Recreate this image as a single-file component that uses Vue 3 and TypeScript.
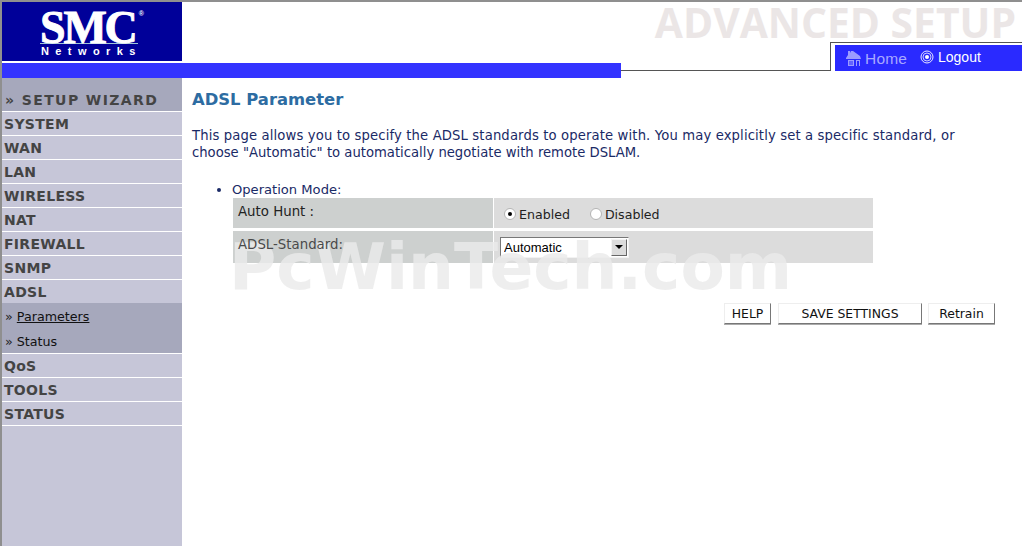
<script setup lang="ts">
import { ref } from 'vue'

const menu = ['SYSTEM', 'WAN', 'LAN', 'WIRELESS', 'NAT', 'FIREWALL', 'SNMP', 'ADSL']
const menuAfter = ['QoS', 'TOOLS', 'STATUS']
const autoHunt = ref('enabled')
const standard = ref('Automatic')
</script>

<template>
  <div class="page">
    <header class="header">
      <div class="brand">
        <div class="logo">
          <div class="logo-mark">SMC<sup>®</sup></div>
          <div class="logo-sub">Networks</div>
        </div>
        <div class="bar"></div>
      </div>
      <div class="head-right">
        <div class="title">ADVANCED SETUP</div>
        <div class="nav-row">
          <div class="nav-line"></div>
          <div class="nav-frame">
            <nav class="nav">
              <a class="nav-link home">
                <svg width="17" height="17" viewBox="0 0 17 17">
                  <path d="M1 8 L3 5 V1 H5 V3 L6 1 H8 L15 6 L16 9 H1 Z" fill="#9c9cff" />
                  <path d="M3 10 H9 V16 H3 Z M11 10 H15 V16 H14 V11 H12 V16 H11 Z" fill="#9c9cff" />
                  <path d="M4 12 H8 M4 14 H8" stroke="#2a2aff" stroke-width="1" />
                </svg>
                Home
              </a>
              <a class="nav-link logout">
                <svg width="14" height="14" viewBox="0 0 14 14">
                  <circle cx="7" cy="7" r="6" fill="none" stroke="#e8e8ff" stroke-width="1" />
                  <circle cx="7" cy="7" r="4" fill="none" stroke="#c8c8ff" stroke-width="1" />
                  <circle cx="7" cy="7" r="2" fill="#fff" />
                </svg>
                Logout
              </a>
            </nav>
          </div>
        </div>
      </div>
    </header>

    <div class="body">
      <aside class="sidebar">
        <a class="wizard">» SETUP WIZARD</a>
        <a v-for="item in menu" :key="item" class="item">{{ item }}</a>
        <div class="submenu">
          <a class="sub"><span class="chev">»</span> <span class="current">Parameters</span></a>
          <a class="sub"><span class="chev">»</span> Status</a>
        </div>
        <a v-for="item in menuAfter" :key="item" class="item">{{ item }}</a>
      </aside>

      <main class="content">
        <h1>ADSL Parameter</h1>
        <p class="intro">
          This page allows you to specify the ADSL standards to operate with. You may explicitly set a specific standard, or
          choose "Automatic" to automatically negotiate with remote DSLAM.
        </p>
        <ul class="modes">
          <li>Operation Mode:</li>
        </ul>
        <div class="form">
          <div class="label first"><span>Auto Hunt :</span></div>
          <div class="value first">
            <label class="radio">
              <input v-model="autoHunt" type="radio" value="enabled" />
              Enabled
            </label>
            <label class="radio">
              <input v-model="autoHunt" type="radio" value="disabled" />
              Disabled
            </label>
          </div>
          <div class="label"><span class="under">ADSL-Standard:</span></div>
          <div class="value">
            <div class="select">
              <select v-model="standard">
                <option>Automatic</option>
                <option>G.Dmt</option>
                <option>G.Lite</option>
                <option>T1.413</option>
              </select>
              <span class="arrow"></span>
            </div>
          </div>
        </div>
        <div class="actions">
          <button class="help">HELP</button>
          <button class="save">SAVE SETTINGS</button>
          <button class="retrain">Retrain</button>
        </div>
      </main>
    </div>

    <div class="stamp">PcWinTech.com</div>
  </div>
</template>

<style>
html, body { background: #fff; overflow: hidden; }
</style>

<style scoped>
.page {
  position: relative;
  box-sizing: border-box;
  height: 546px;
  border-top: 2px solid #8f8f8f;
  border-left: 2px solid #8f8f8f;
  display: flex;
  flex-direction: column;
  font-family: "DejaVu Sans", Verdana, sans-serif;
  overflow: hidden;
}
.header { display: flex; height: 76px; }
.brand { width: 619px; flex-shrink: 0; }
.logo {
  width: 180px; height: 59px; background: #000099;
  color: #fff; box-sizing: border-box; padding: 7px 0 0 38px;
}
.logo-mark {
  font-family: "Liberation Serif", serif; font-weight: bold; font-size: 46px;
  box-sizing: border-box; padding-top: 4px;
  line-height: 30px; letter-spacing: -2.2px; height: 35px; width: 98px;
  -webkit-text-stroke: .9px #fff;
  border-bottom: 1px solid #9fc4d8; white-space: nowrap;
}
.logo-mark sup {
  font-size: 7px; font-family: "Liberation Sans", sans-serif; letter-spacing: 0;
  -webkit-text-stroke: 0; vertical-align: 27px; line-height: 0; margin-left: 3px;
}
.logo-sub {
  font-family: "Liberation Sans", sans-serif; font-weight: bold; font-size: 11px;
  letter-spacing: 6.4px; line-height: 12px; margin-top: 1px; padding-left: 1px; white-space: nowrap;
}
.bar { height: 15px; margin-top: 2px; background: #3333ff; }
.head-right { flex: 1; display: flex; flex-direction: column; }
.title {
  height: 40px; text-align: right; padding-right: 6px;
  font-family: "Open Sans", sans-serif; font-weight: 700; font-size: 40.8px;
  line-height: 40px; color: #ebe6e6; white-space: nowrap;
}
.nav-row { display: flex; height: 29px; }
.nav-line { width: 209px; border-bottom: 1px solid #555; box-sizing: border-box; }
.nav-frame {
  flex: 1; border-top: 1px solid #555; border-left: 1px solid #555;
  padding: 2px 0 0 4px; box-sizing: border-box;
  background: linear-gradient(#ebe6e6, #ebe6e6) no-repeat 4px 100% / 84px 1px;
}
.nav {
  height: 26px; background: #2a2aff; display: flex; align-items: center;
  padding-left: 10px; font-family: "Liberation Sans", Arial, sans-serif; font-size: 14px;
}
.nav-link { display: flex; align-items: center; gap: 3px; }
.home { color: #a8a8ff; font-size: 15.5px; width: 75px; letter-spacing: .2px; padding-top: 1px; }
.logout { color: #fff; gap: 4px; margin-bottom: 2px; }

.body { flex: 1; display: flex; min-height: 0; }
.sidebar {
  width: 180px; flex-shrink: 0; background: #c6c6d8; color: #444;
  font-weight: bold; font-size: 14px; letter-spacing: .3px;
}
.wizard {
  display: block; height: 34px; box-sizing: border-box; padding: 13px 0 0 3px;
  background: #a6a8bc; border-bottom: 1px solid #fff;
  font-size: 14px; line-height: 19px; letter-spacing: 1.4px;
}
.item {
  display: block; height: 24px; box-sizing: border-box; padding: 1px 0 0 2px;
  border-bottom: 1px solid #fff; line-height: 23px;
}
.submenu { background: #a6a8bc; height: 50px; border-bottom: 1px solid #fff; margin-top: -1px; }
.sub {
  display: block; height: 25px; line-height: 27px; padding-left: 3px;
  font-weight: normal; font-size: 12.7px; color: #111; letter-spacing: 0;
}
.chev { color: #222; }
.current { text-decoration: underline; }

.content { flex: 1; padding: 0 0 0 10px; color: #1a2a66; font-size: 13.2px; min-width: 0; }
h1 { margin: 12px 0 0; font-size: 16.4px; line-height: 20px; color: #2d6ca2; font-weight: bold; }
.intro { margin: 17px 0 0; line-height: 17px; width: 790px; }
.intro::first-line { letter-spacing: .13px; }
.modes { margin: 20px 0 0; padding: 0 0 0 40px; line-height: 17px; font-size: 13.1px; }
.form {
  display: grid; grid-template-columns: 260px 379px; column-gap: 1px;
  margin-left: 41px; width: 640px; color: #222; font-size: 13.33px;
}
.label { background: #cdd0cf; height: 32px; padding: 5px 0 0 5px; box-sizing: border-box; line-height: 17px; }
.under { position: relative; z-index: 1; color: #4a4a4a; }
.value { background: #dcdcdc; height: 32px; display: flex; align-items: center; padding-left: 6px; box-sizing: border-box; }
.first { height: 30px; margin-bottom: 3px; }
.value.first { padding-left: 10px; padding-top: 2px; font-size: 12.6px; }
.radio { display: flex; align-items: center; gap: 3px; margin-right: 20px; }
.radio input {
  appearance: none; width: 12px; height: 12px; margin: 0; border-radius: 50%;
  background: #fff; border: 1px solid #b4b4b4; box-sizing: border-box;
  display: grid; place-items: center;
}
.radio input:checked::after { content: ''; width: 4px; height: 4px; border-radius: 50%; background: #000; }
.select { position: relative; width: 129px; height: 21px; }
.select select {
  appearance: none; width: 100%; height: 100%; background: #fff; box-sizing: border-box;
  border: 1px solid; border-color: #777 #f2f2f2 #f2f2f2 #777; border-radius: 0;
  padding: 0 0 0 3px; margin: 0;
  font-family: "Liberation Sans", Arial, sans-serif; font-size: 13px; color: #000;
}
.arrow {
  position: absolute; right: 2px; top: 2px; width: 16px; height: 17px; background: #dcdcdc;
  box-sizing: border-box; border: 1px solid; border-color: #f4f4f4 #666 #666 #f4f4f4;
  display: grid; place-items: center; pointer-events: none;
}
.arrow::after {
  content: ''; border-left: 4px solid transparent; border-right: 4px solid transparent;
  border-top: 4px solid #000;
}
.actions { display: flex; gap: 6px; margin: 40px 0 0 532px; }
button {
  height: 21px; padding: 0; background: #fff; color: #111; box-sizing: border-box;
  border: 1px solid; border-color: #eee #777 #777 #eee;
  box-shadow: 0 1px 0 #aaa;
  font-family: "DejaVu Sans", Verdana, sans-serif; font-size: 12.4px;
}
.help { width: 47px; }
.save { width: 144px; margin-left: 1px; }
.retrain { width: 67px; }

.stamp {
  position: absolute; left: 227px; top: 227px;
  font-family: "DejaVu Sans", Verdana, sans-serif; font-weight: bold; font-size: 64.6px;
  line-height: 76px; color: rgba(234, 234, 234, .82); pointer-events: none; white-space: nowrap;
}
</style>
